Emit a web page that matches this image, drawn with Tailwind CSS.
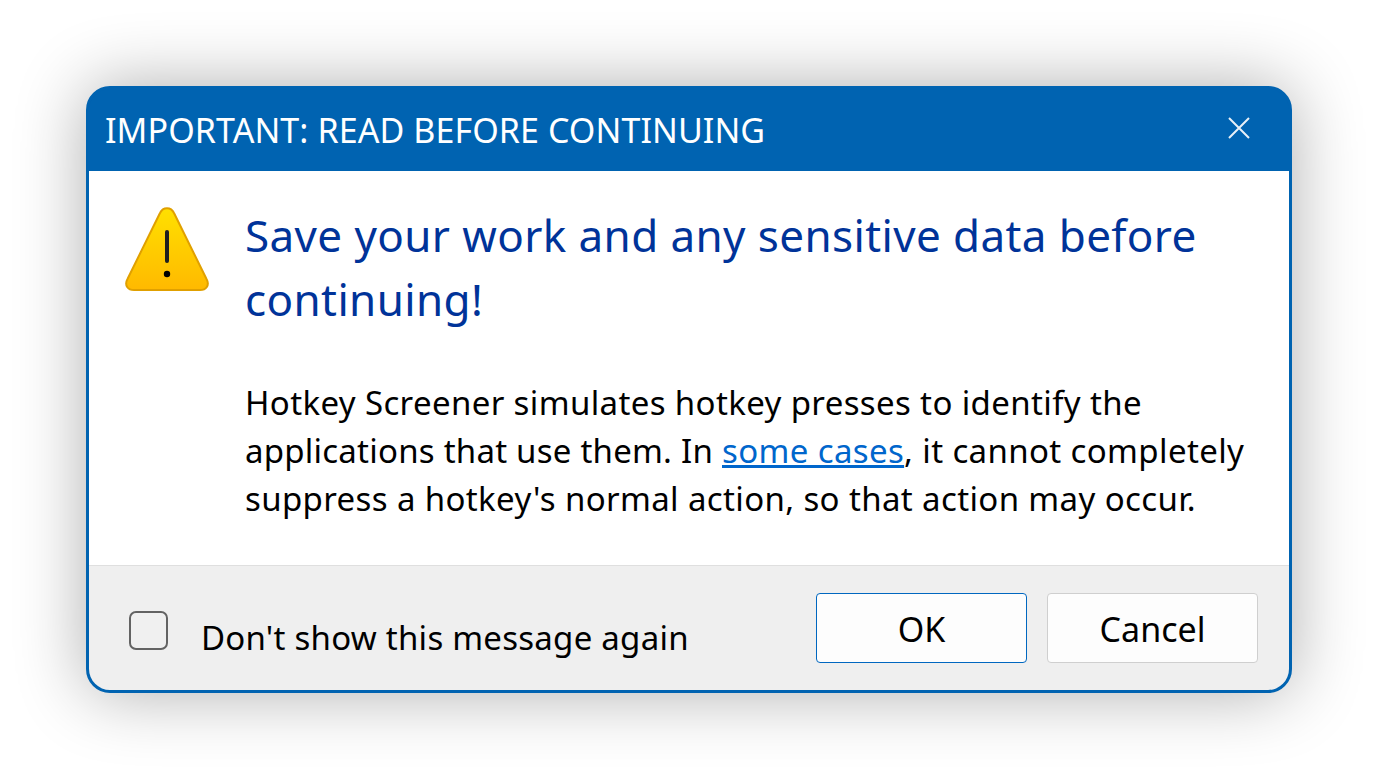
<!doctype html>
<html>
<head>
<meta charset="utf-8">
<script src="https://cdn.jsdelivr.net/npm/@tailwindcss/browser@4"></script>
</head>
<body class="bg-white h-[780px] overflow-hidden font-['Noto_Sans',sans-serif]">
<div class="pt-[86px] pl-[86px]">
  <div class="w-[1206px] h-[607px] rounded-[24px] border-[3px] border-[#0063b1] overflow-hidden flex flex-col shadow-[0_0_70px_rgba(0,0,0,0.32)] bg-[#0063b1]">
    <!-- title bar -->
    <div class="h-[82px] shrink-0 bg-[#0063b1] flex items-center justify-between pl-[16px] pr-[39px]">
      <span class="text-white text-[34px] leading-[48px] tracking-[0.08px]">IMPORTANT: READ BEFORE CONTINUING</span>
      <svg width="22" height="22" viewBox="0 0 22 22" fill="none" stroke="#e8f0f7" stroke-width="2" class="-mt-[5px]"><path d="M1 1 21 21M21 1 1 21"></path></svg>
    </div>
    <!-- body -->
    <div class="flex-1 flex bg-white pl-[36px] pr-[30px] pt-[32px]">
      <svg width="84" height="84" viewBox="0 0 84 84" class="shrink-0 mt-[4px]">
        <defs><linearGradient id="warn" x1="0" y1="0" x2="0" y2="1"><stop offset="0" stop-color="#ffe000"></stop><stop offset="1" stop-color="#ffb900"></stop></linearGradient></defs>
        <path d="M35 6C38 -0.500 46 -0.500 49 6L81.500 72C85 78.500 81 83 75 83H9C3 83 -1 78.500 2.500 72Z" fill="url(#warn)" stroke="#e0a000" stroke-width="2"></path>
        <rect x="40" y="23" width="4" height="33" rx="2" fill="#1f1f1f"></rect>
        <circle cx="42" cy="67" r="3.200" fill="#000"></circle>
      </svg>
      <div class="ml-[36px] flex-1">
        <h1 class="text-[#003399] text-[44px] leading-[64px] tracking-[0.39px]">Save your work and any sensitive data before continuing!</h1>
        <p class="mt-[48px] text-black text-[33px] leading-[48px] tracking-[0.37px]">Hotkey Screener simulates hotkey presses to identify the <span class="tracking-[0.23px]">applications that use them. In</span> <a class="text-[#0066cc] underline">some cases</a>, it cannot completely suppress a hotkey's normal action, so that action may occur.</p>
      </div>
    </div>
    <!-- footer -->
    <div class="h-[125px] shrink-0 bg-[#efefef] border-t border-[#dfdfdf] flex items-start pl-[40px] pr-[31px]">
      <div class="w-[39px] h-[39px] rounded-[7px] border-[2px] border-[#636363] bg-[#f0f0f0] mt-[45px]"></div>
      <span class="ml-[33px] mt-[48px] text-black text-[33px] leading-[48px] tracking-[0.25px]">Don't show this message again</span>
      <div class="ml-auto flex gap-[20px] mt-[27px]">
        <button class="w-[211px] h-[70px] pt-[3px] rounded-[4px] border border-[#0067c0] bg-[#fdfdfd] text-black text-[34px]">OK</button>
        <button class="w-[211px] h-[70px] pt-[3px] rounded-[4px] border border-[#cfcfcf] bg-[#fdfdfd] text-black text-[34px]">Cancel</button>
      </div>
    </div>
  </div>
</div>
</body>
</html>
